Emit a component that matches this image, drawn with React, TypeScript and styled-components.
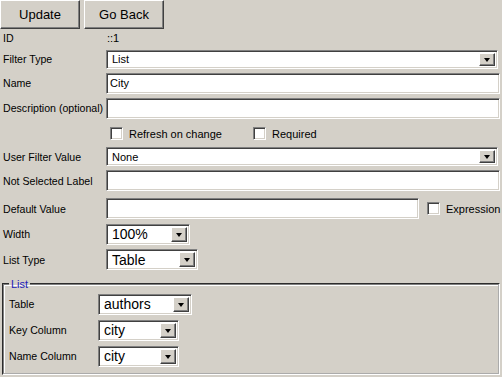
import React from 'react'
import styled, { createGlobalStyle } from 'styled-components'

const GlobalStyle = createGlobalStyle`
  body {
    margin: 0;
    background: #d4d0c8;
    font-family: "Liberation Sans", Arial, sans-serif;
    font-size: 11px;
    color: #000;
  }
`

const inset = `
  border-top: 1px solid #808080;
  border-left: 1px solid #808080;
  border-right: 1px solid #fff;
  border-bottom: 1px solid #fff;
  box-shadow: inset 1px 1px 0 #404040, inset -1px -1px 0 #d4d0c8;
`

const outset = `
  border-top: 1px solid #fff;
  border-left: 1px solid #fff;
  border-right: 1px solid #404040;
  border-bottom: 1px solid #404040;
  box-shadow: inset -1px -1px 0 #808080, inset 1px 1px 0 #d4d0c8;
`

const Page = styled.div`
  width: 502px;
  display: flex;
  flex-direction: column;
  box-sizing: border-box;
`

const Toolbar = styled.div`
  display: flex;
  gap: 4px;
  height: 29px;
`

const Button = styled.button<{ $w: number }>`
  width: ${p => p.$w}px;
  height: 29px;
  background: #d4d0c8;
  ${outset}
  font-family: "Liberation Sans", Arial, sans-serif;
  font-size: 13px;
  color: #000;
  padding: 0 0 1px 0;
  box-sizing: border-box;
`

const Row = styled.div<{ $h: number; $indent?: number }>`
  display: flex;
  align-items: center;
  flex-shrink: 0;
  height: ${p => p.$h}px;
  padding-left: ${p => p.$indent ?? 0}px;
`

const Label = styled.div<{ $w?: number }>`
  width: ${p => p.$w ?? 103}px;
  padding-left: 3px;
  flex-shrink: 0;
  white-space: nowrap;
  font-size: 10.6px;
`

const Plain = styled.div`
  padding-left: 1px;
`

const TextInput = styled.div<{ $w: number }>`
  width: ${p => p.$w}px;
  height: 21px;
  background: #fff;
  ${inset}
  box-sizing: border-box;
  display: flex;
  align-items: center;
  padding-left: 3px;
  font-size: 11px;
`

const SelectBox = styled.div<{ $w: number; $h: number; $big?: boolean }>`
  width: ${p => p.$w}px;
  height: ${p => p.$h}px;
  background: #fff;
  ${inset}
  box-sizing: border-box;
  display: flex;
  align-items: center;
  padding: 2px;
  font-size: ${p => (p.$big ? 14 : 11)}px;
`

const SelectValue = styled.div`
  flex: 1;
  padding-left: 3px;
`

const ArrowButton = styled.div`
  width: 16px;
  align-self: stretch;
  background: #d4d0c8;
  ${outset}
  box-sizing: border-box;
  display: flex;
  align-items: center;
  justify-content: center;
`

const Triangle = styled.div`
  width: 0;
  height: 0;
  border-left: 3.5px solid transparent;
  border-right: 3.5px solid transparent;
  border-top: 4px solid #000;
  margin-top: 1px;
`

const Check = styled.span`
  width: 13px;
  height: 13px;
  background: #fff;
  ${inset}
  box-sizing: border-box;
  flex-shrink: 0;
`

const CheckItem = styled.label<{ $w?: number; $gapLeft?: number }>`
  display: flex;
  align-items: center;
  gap: 6px;
  width: ${p => (p.$w ? `${p.$w}px` : 'auto')};
  margin-left: ${p => p.$gapLeft ?? 0}px;
`

const Fieldset = styled.fieldset`
  margin: 3px 2px 0 2px;
  padding: 0 2px 4px 2px;
  border: 2px groove #f4f2ee;
  border-color: #808080 #fff #fff #808080;
  box-shadow: inset 1px 1px 0 #fff, 1px 1px 0 #808080 inset;
  width: 498px;
  box-sizing: border-box;
  flex-shrink: 0;
`

const Legend = styled.legend`
  color: #2020b8;
  padding: 0 2px;
  margin-left: 3px;
  font-size: 11px;
  line-height: 14px;
`

const Select = ({ value, w, h = 21, big }: { value: string; w: number; h?: number; big?: boolean }) => (
  <SelectBox $w={w} $h={h} $big={big}>
    <SelectValue>{value}</SelectValue>
    <ArrowButton>
      <Triangle />
    </ArrowButton>
  </SelectBox>
)

const App = () => {
  return (
    <Page>
      <GlobalStyle />
      <Toolbar>
        <Button $w={80}>Update</Button>
        <Button $w={80}>Go Back</Button>
      </Toolbar>
      <Row $h={18}>
        <Label>ID</Label>
        <Plain>::1</Plain>
      </Row>
      <Row $h={24}>
        <Label>Filter Type</Label>
        <Select value="List" w={392} h={19} />
      </Row>
      <Row $h={24}>
        <Label>Name</Label>
        <TextInput $w={394}>City</TextInput>
      </Row>
      <Row $h={26}>
        <Label>Description (optional)</Label>
        <TextInput $w={394} />
      </Row>
      <Row $h={25} $indent={110}>
        <CheckItem $w={143}>
          <Check />
          Refresh on change
        </CheckItem>
        <CheckItem>
          <Check />
          Required
        </CheckItem>
      </Row>
      <Row $h={21}>
        <Label>User Filter Value</Label>
        <Select value="None" w={392} h={19} />
      </Row>
      <Row $h={27}>
        <Label>Not Selected Label</Label>
        <TextInput $w={394} />
      </Row>
      <Row $h={29}>
        <Label>Default Value</Label>
        <TextInput $w={313} />
        <CheckItem $gapLeft={8}>
          <Check />
          Expression
        </CheckItem>
      </Row>
      <Row $h={22}>
        <Label>Width</Label>
        <Select value="100%" w={84} big />
      </Row>
      <Row $h={29}>
        <Label>List Type</Label>
        <Select value="Table" w={92} big />
      </Row>
      <Fieldset>
        <Legend>List</Legend>
        <Row $h={26}>
          <Label $w={89}>Table</Label>
          <Select value="authors" w={94} big />
        </Row>
        <Row $h={26}>
          <Label $w={89}>Key Column</Label>
          <Select value="city" w={81} big />
        </Row>
        <Row $h={26}>
          <Label $w={89}>Name Column</Label>
          <Select value="city" w={81} big />
        </Row>
      </Fieldset>
    </Page>
  )
}

export default App
